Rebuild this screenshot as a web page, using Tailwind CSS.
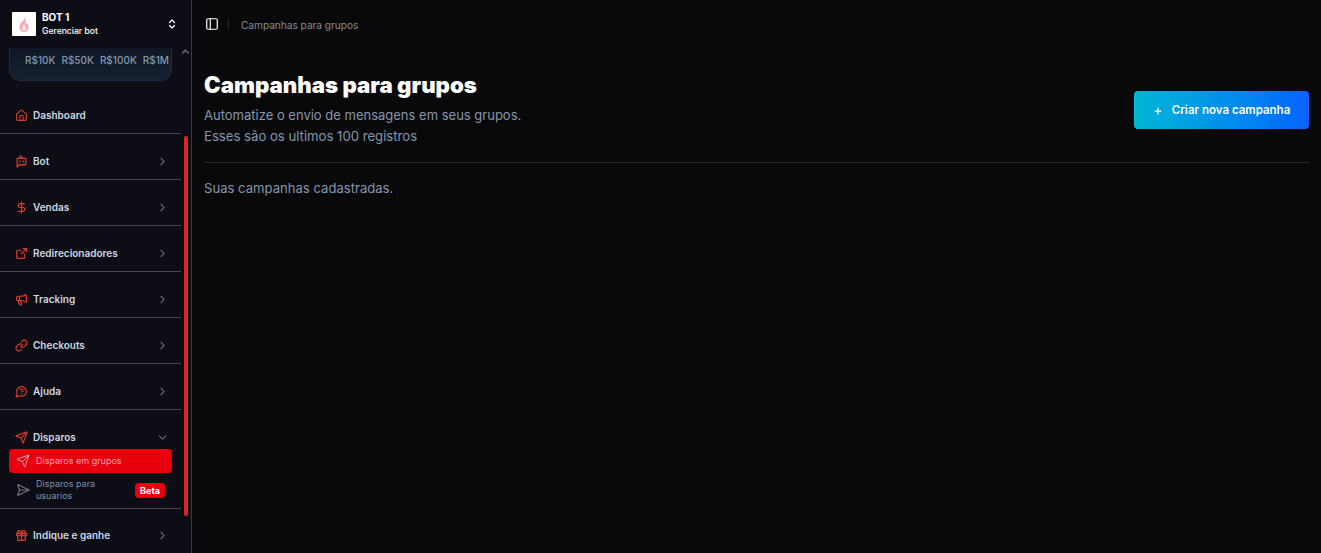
<!DOCTYPE html>
<html lang="pt-BR">
<head>
  <meta charset="UTF-8"/>
  <title>Campanhas para grupos</title>
  <script src="https://cdn.jsdelivr.net/npm/@tailwindcss/browser@4"></script>
</head>
<body class="bg-[#09090b] font-['Inter',sans-serif] overflow-hidden">
  <div class="flex h-[553px] w-[1321px]">
    <!-- Sidebar -->
    <aside class="relative w-[192px] shrink-0 h-full bg-[#0c0d15] border-r border-[#3a3a40] overflow-hidden">
      <div class="h-[48px] flex items-center pl-3 pr-[12px]">
        <div class="w-6 h-6 bg-white rounded-[1px] flex items-center justify-center shrink-0">
          <svg class="w-[14px] h-[18px]" viewBox="0 0 14 18"><path d="M8 1c.4 2.500-1 3.800-2.600 5.600C3.800 8.400 2.500 10 2.500 12.200 2.500 15 4.500 17 7 17s4.500-2 4.500-4.600c0-2-1-3.400-1.700-4.600-.5 1-1 1.500-1.700 1.800C8.800 7 9.300 3.500 8 1z" fill="#f9a8af"/><path d="M7.200 9c-1 1.300-2.200 2.600-2.200 4.200 0 1.300.9 2.400 2.100 2.400s1.900-1.100 1.900-2.400c0-1.600-1.200-2.700-1.800-4.200z" fill="#fde9ea"/></svg>
        </div>
        <div class="ml-[6px] flex-1 min-w-0">
          <div class="text-[10px] leading-[14px] font-bold text-white">BOT 1</div>
          <div class="text-[8.6px] leading-[13px] mt-[1px] font-medium text-white">Gerenciar bot</div>
        </div>
        <svg class="w-[12px] h-[12px] mr-[1px]" viewBox="0 0 24 24" fill="none" stroke="#fff" stroke-width="2.500" stroke-linecap="round" stroke-linejoin="round"><path d="m7 15 5 5 5-5"/><path d="m7 9 5-5 5 5"/></svg>
      </div>

      <!-- plan card, scrolled off at the top -->
      <div class="mx-[9px] w-[163px] h-[33px] rounded-b-[12px] border-x border-b border-[#232b3a] bg-gradient-to-b from-[#0f1724] to-[#162132] pl-[15px] flex gap-[6px] pt-[5px] text-[10px] leading-[14px] font-medium text-[#8497ab] whitespace-nowrap">
        <span>R$10K</span><span>R$50K</span><span>R$100K</span><span>R$1M</span>
      </div>

      <nav class="w-[181px] mt-[7px]">
        <a class="h-[46px] pt-[10px] flex items-center pl-[15px] pr-[12px] border-b border-[#46464d] text-[10px] font-semibold text-[#cfd6e1]">
          <svg class="w-[13px] h-[13px] mr-[5px] text-[#dc3a2e]" viewBox="0 0 24 24" fill="none" stroke="currentColor" stroke-width="2" stroke-linecap="round" stroke-linejoin="round"><path d="M15 21v-8a1 1 0 0 0-1-1h-4a1 1 0 0 0-1 1v8"/><path d="M3 10a2 2 0 0 1 .709-1.528l7-5.999a2 2 0 0 1 2.582 0l7 5.999A2 2 0 0 1 21 10v9a2 2 0 0 1-2 2H5a2 2 0 0 1-2-2z"/></svg>
          <span class="flex-1">Dashboard</span>
        </a>
        <a class="h-[46px] pt-[10px] flex items-center pl-[15px] pr-[12px] border-b border-[#46464d] text-[10px] font-semibold text-[#cfd6e1]">
          <svg class="w-[13px] h-[13px] mr-[5px] text-[#dc3a2e]" viewBox="0 0 24 24" fill="none" stroke="currentColor" stroke-width="2.400" stroke-linecap="round" stroke-linejoin="round"><path d="M12 6V2H9"/><path d="m8 18-4 4V8a2 2 0 0 1 2-2h12a2 2 0 0 1 2 2v8a2 2 0 0 1-2 2Z"/><path d="M9 11v2"/><path d="M15 11v2"/></svg>
          <span class="flex-1">Bot</span>
          <svg class="w-[13px] h-[13px] text-[#62666e]" viewBox="0 0 24 24" fill="none" stroke="currentColor" stroke-width="2" stroke-linecap="round" stroke-linejoin="round"><path d="m9 18 6-6-6-6"/></svg>
        </a>
        <a class="h-[46px] pt-[10px] flex items-center pl-[15px] pr-[12px] border-b border-[#46464d] text-[10px] font-semibold text-[#cfd6e1]">
          <svg class="w-[13px] h-[13px] mr-[5px] text-[#dc3a2e]" viewBox="0 0 24 24" fill="none" stroke="currentColor" stroke-width="2.200" stroke-linecap="round" stroke-linejoin="round"><path d="M12 2v20"/><path d="M17 5H9.500a3.500 3.500 0 0 0 0 7h5a3.500 3.500 0 0 1 0 7H6"/></svg>
          <span class="flex-1">Vendas</span>
          <svg class="w-[13px] h-[13px] text-[#62666e]" viewBox="0 0 24 24" fill="none" stroke="currentColor" stroke-width="2" stroke-linecap="round" stroke-linejoin="round"><path d="m9 18 6-6-6-6"/></svg>
        </a>
        <a class="h-[46px] pt-[10px] flex items-center pl-[15px] pr-[12px] border-b border-[#46464d] text-[10px] font-semibold text-[#cfd6e1]">
          <svg class="w-[13px] h-[13px] mr-[5px] text-[#dc3a2e]" viewBox="0 0 24 24" fill="none" stroke="currentColor" stroke-width="2.200" stroke-linecap="round" stroke-linejoin="round"><path d="M18 13v6a2 2 0 0 1-2 2H5a2 2 0 0 1-2-2V8a2 2 0 0 1 2-2h6"/><path d="m21 3-9 9"/><path d="M15 3h6v6"/></svg>
          <span class="flex-1">Redirecionadores</span>
          <svg class="w-[13px] h-[13px] text-[#62666e]" viewBox="0 0 24 24" fill="none" stroke="currentColor" stroke-width="2" stroke-linecap="round" stroke-linejoin="round"><path d="m9 18 6-6-6-6"/></svg>
        </a>
        <a class="h-[46px] pt-[10px] flex items-center pl-[15px] pr-[12px] border-b border-[#46464d] text-[10px] font-semibold text-[#cfd6e1]">
          <svg class="w-[13px] h-[13px] mr-[5px] text-[#dc3a2e]" viewBox="0 0 24 24" fill="none" stroke="currentColor" stroke-width="2.200" stroke-linecap="round" stroke-linejoin="round"><path d="M11 6a13 13 0 0 0 8.400-2.800A1 1 0 0 1 21 4v12a1 1 0 0 1-1.600.8A13 13 0 0 0 11 14H5a2 2 0 0 1-2-2V8a2 2 0 0 1 2-2z"/><path d="M6 14a12 12 0 0 0 2.400 7.200 2 2 0 0 0 3.200-2.400A8 8 0 0 1 10 14"/><path d="M8 6v8"/></svg>
          <span class="flex-1">Tracking</span>
          <svg class="w-[13px] h-[13px] text-[#62666e]" viewBox="0 0 24 24" fill="none" stroke="currentColor" stroke-width="2" stroke-linecap="round" stroke-linejoin="round"><path d="m9 18 6-6-6-6"/></svg>
        </a>
        <a class="h-[46px] pt-[10px] flex items-center pl-[15px] pr-[12px] border-b border-[#46464d] text-[10px] font-semibold text-[#cfd6e1]">
          <svg class="w-[13px] h-[13px] mr-[5px] text-[#dc3a2e]" viewBox="0 0 24 24" fill="none" stroke="currentColor" stroke-width="2.200" stroke-linecap="round" stroke-linejoin="round"><path d="M10 13a5 5 0 0 0 7.540.540l3-3a5 5 0 0 0-7.070-7.070l-1.720 1.710"/><path d="M14 11a5 5 0 0 0-7.540-.540l-3 3a5 5 0 0 0 7.070 7.070l1.710-1.710"/></svg>
          <span class="flex-1">Checkouts</span>
          <svg class="w-[13px] h-[13px] text-[#62666e]" viewBox="0 0 24 24" fill="none" stroke="currentColor" stroke-width="2" stroke-linecap="round" stroke-linejoin="round"><path d="m9 18 6-6-6-6"/></svg>
        </a>
        <a class="h-[46px] pt-[10px] flex items-center pl-[15px] pr-[12px] border-b border-[#46464d] text-[10px] font-semibold text-[#cfd6e1]">
          <svg class="w-[13px] h-[13px] mr-[5px] text-[#dc3a2e]" viewBox="0 0 24 24" fill="none" stroke="currentColor" stroke-width="2.200" stroke-linecap="round" stroke-linejoin="round"><path d="M7.900 20A9 9 0 1 0 4 16.100L2 22Z"/><path d="M9.090 9a3 3 0 0 1 5.830 1c0 2-3 3-3 3"/><path d="M12 17h.01"/></svg>
          <span class="flex-1">Ajuda</span>
          <svg class="w-[13px] h-[13px] text-[#62666e]" viewBox="0 0 24 24" fill="none" stroke="currentColor" stroke-width="2" stroke-linecap="round" stroke-linejoin="round"><path d="m9 18 6-6-6-6"/></svg>
        </a>

        <!-- Disparos, open -->
        <div class="h-[99px] border-b border-[#46464d]">
          <div class="h-[39px] pt-[16px] flex items-center pl-[15px] pr-[12px] text-[10px] font-semibold text-[#cfd6e1]">
            <svg class="w-[13px] h-[13px] mr-[5px] text-[#dc3a2e]" viewBox="0 0 24 24" fill="none" stroke="currentColor" stroke-width="2" stroke-linecap="round" stroke-linejoin="round"><path d="M14.536 21.686a.500.500 0 0 0 .937-.024l6.500-19a.496.496 0 0 0-.635-.635l-19 6.500a.500.500 0 0 0-.024.937l7.930 3.180a2 2 0 0 1 1.112 1.110z"/><path d="m21.854 2.147-10.940 10.939"/></svg>
            <span class="flex-1">Disparos</span>
            <svg class="w-[13px] h-[13px] text-[#62666e]" viewBox="0 0 24 24" fill="none" stroke="currentColor" stroke-width="2" stroke-linecap="round" stroke-linejoin="round"><path d="m6 9 6 6 6-6"/></svg>
          </div>
          <div class="ml-[9px] w-[163px] h-[24px] rounded-[4px] bg-[#e8000d] flex items-center pl-[7px] text-[9px] font-normal text-[#f8a8b0]">
            <svg class="w-[14px] h-[14px] mr-[6px] text-[#e3b4b9]" viewBox="0 0 24 24" fill="none" stroke="currentColor" stroke-width="1.600" stroke-linecap="round" stroke-linejoin="round"><path d="M14.536 21.686a.500.500 0 0 0 .937-.024l6.500-19a.496.496 0 0 0-.635-.635l-19 6.500a.500.500 0 0 0-.024.937l7.930 3.180a2 2 0 0 1 1.112 1.110z"/><path d="m21.854 2.147-10.940 10.939"/></svg>
            Disparos em grupos
          </div>
          <div class="ml-[9px] w-[163px] h-[34px] flex items-center pl-[7px] text-[9px] leading-[12px] font-normal text-[#7f93ad]">
            <svg class="w-[14px] h-[14px] mr-[6px] shrink-0 text-[#74787f]" viewBox="0 0 24 24" fill="none" stroke="currentColor" stroke-width="2" stroke-linecap="round" stroke-linejoin="round"><path d="M3.714 3.048a.498.498 0 0 0-.683.627l2.843 7.627a2 2 0 0 1 0 1.396l-2.842 7.627a.498.498 0 0 0 .682.627l18-8.500a.500.500 0 0 0 0-.904z"/><path d="M6 12h16"/></svg>
            <span class="w-[66px]">Disparos para usuarios</span>
            <span class="ml-auto mr-[7px] h-[15px] px-[5px] rounded-[4px] bg-[#e8000d] text-white text-[9px] font-bold leading-[15px]">Beta</span>
          </div>
        </div>

        <a class="h-[52px] flex items-center pl-[15px] pr-[12px] text-[10px] font-semibold text-[#cfd6e1]">
          <svg class="w-[13px] h-[13px] mr-[5px] text-[#dc3a2e]" viewBox="0 0 24 24" fill="none" stroke="currentColor" stroke-width="2.400" stroke-linecap="round" stroke-linejoin="round"><rect x="3" y="8" width="18" height="4" rx="1"/><path d="M12 8v13"/><path d="M19 12v7a2 2 0 0 1-2 2H7a2 2 0 0 1-2-2v-7"/><path d="M7.500 8a2.500 2.500 0 0 1 0-5A4.800 8 0 0 1 12 8a4.800 8 0 0 1 4.500-5 2.500 2.500 0 0 1 0 5"/></svg>
          <span class="flex-1">Indique e ganhe</span>
          <svg class="w-[13px] h-[13px] text-[#62666e]" viewBox="0 0 24 24" fill="none" stroke="currentColor" stroke-width="2" stroke-linecap="round" stroke-linejoin="round"><path d="m9 18 6-6-6-6"/></svg>
        </a>
      </nav>

      <!-- scrollbar overlay -->
      <svg class="absolute left-[181px] top-[47px] w-[9px] h-[9px] text-[#5c6068]" viewBox="0 0 10 10" fill="none" stroke="currentColor" stroke-width="2"><path d="M1.500 7 5 3.500 8.500 7"/></svg>
      <div class="absolute left-[184px] top-[136px] w-[4px] h-[380px] rounded-full bg-[#dc2626]"></div>
    </aside>

    <!-- Main -->
    <main class="flex-1 min-w-0 pl-[12px] pr-[12px]">
      <header class="h-[48px] flex items-center">
        <svg class="w-[14px] h-[14px] ml-[1px] text-white" viewBox="0 0 24 24" fill="none" stroke="currentColor" stroke-width="2" stroke-linecap="round" stroke-linejoin="round"><rect width="18" height="18" x="3" y="3" rx="2"/><path d="M9 3v18"/></svg>
        <div class="w-px h-[12px] bg-[#27272a] ml-[9px] mr-[12px]"></div>
        <span class="text-[10.100px] leading-[14px] pt-[1px] text-[#85898f]">Campanhas para grupos</span>
      </header>
      <section class="pt-[23px] h-[115px] border-b border-[#27272a] flex justify-between">
        <div>
          <h1 class="text-[22.250px] leading-[28px] font-black text-white">Campanhas para grupos</h1>
          <p class="mt-[6px] text-[13px] leading-[21px] text-[#8497ab]">Automatize o envio de mensagens em seus grupos.</p>
          <p class="text-[13.150px] leading-[21px] text-[#8497ab]">Esses são os ultimos 100 registros</p>
        </div>
        <button class="mt-[20px] w-[175px] h-[38px] pt-[1px] rounded-[4px] bg-gradient-to-r from-[#06b6d4] to-[#0f62fe] flex items-center justify-center text-[11.500px] font-semibold text-white">
          <svg class="w-[10px] h-[10px] mr-[9px]" viewBox="0 0 24 24" fill="none" stroke="currentColor" stroke-width="3" stroke-linecap="round"><path d="M5 12h14"/><path d="M12 5v14"/></svg>
          Criar nova campanha
        </button>
      </section>
      <p class="mt-[15px] text-[13.100px] leading-[20px] text-[#8497ab]">Suas campanhas cadastradas.</p>
    </main>
  </div>
</body>
</html>
